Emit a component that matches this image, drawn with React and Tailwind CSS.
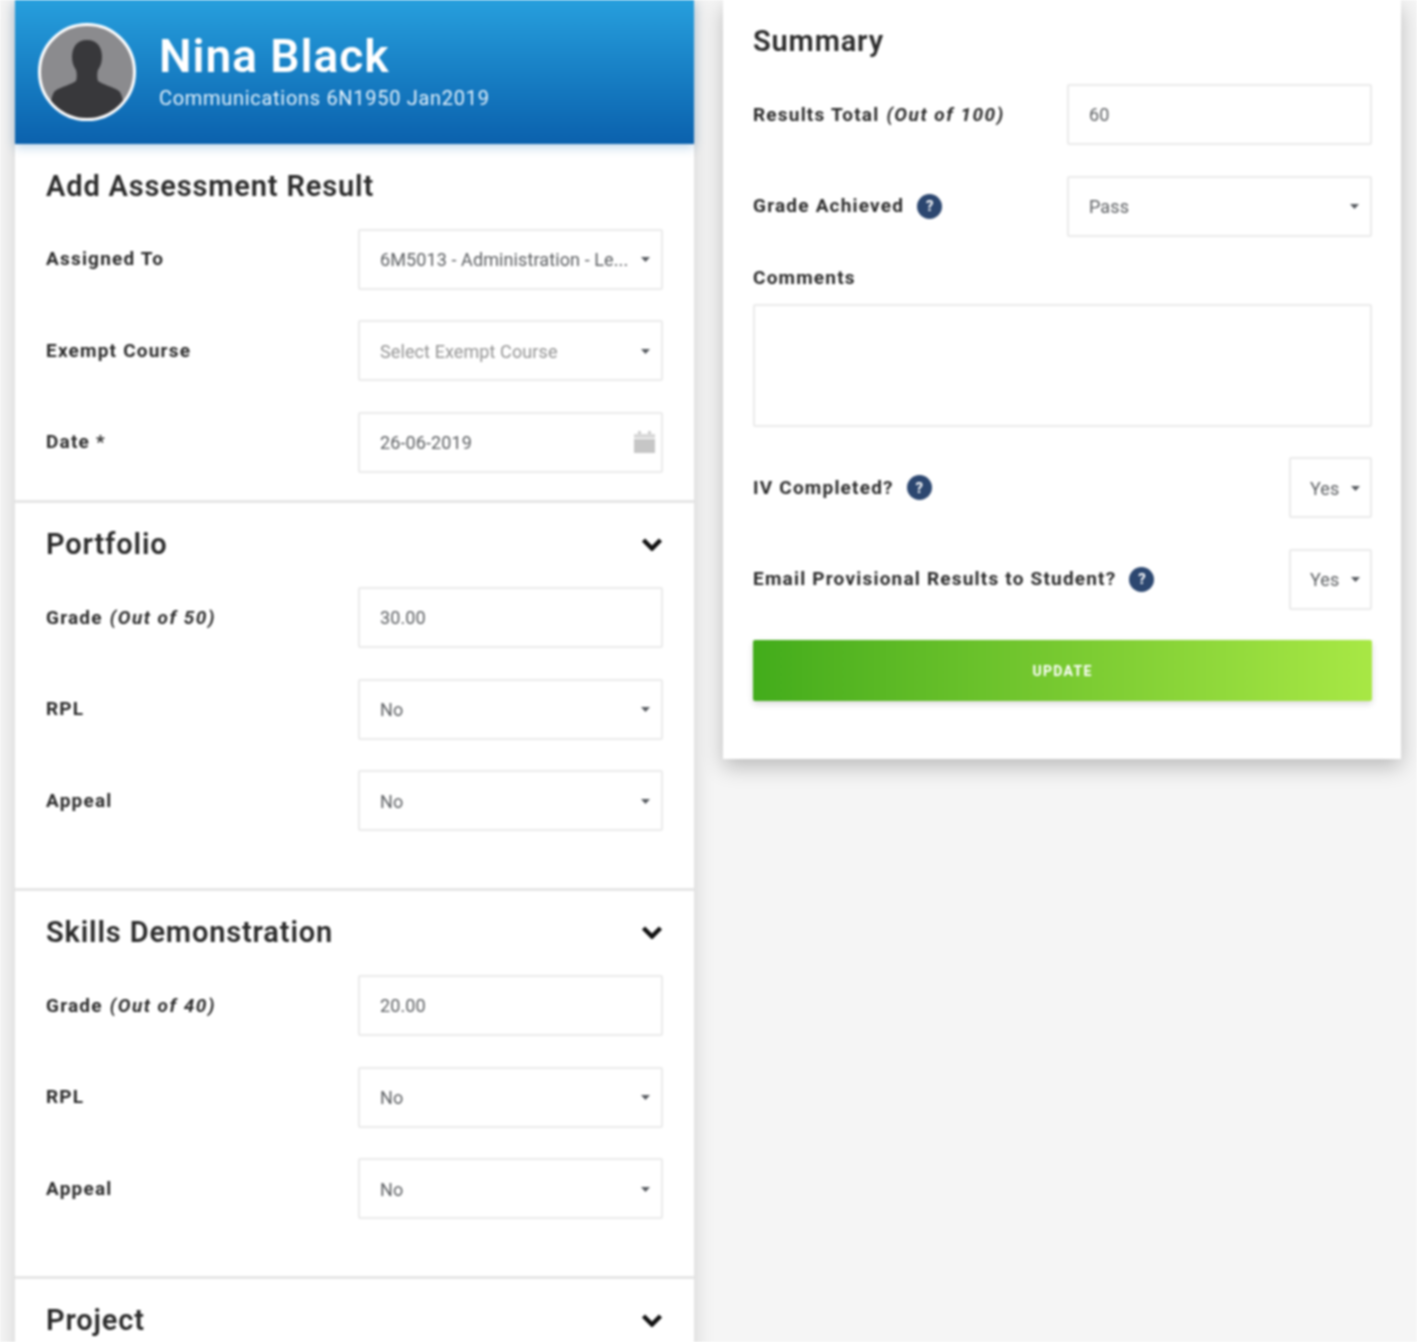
function Caret() {
  return (
    <svg width="9" height="5" viewBox="0 0 9 5" className="shrink-0">
      <path d="M0 0h9L4.5 5z" fill="#55595e" />
    </svg>
  );
}

function Label({ children, italic }) {
  return (
    <div className="text-[19px] leading-6 font-bold text-[#2b2b2b] tracking-[1.2px] whitespace-nowrap">
      {children}
      {italic && <em className="ml-[7px] italic font-bold tracking-[1.5px]">{italic}</em>}
    </div>
  );
}

function Box({ children, className = "" }) {
  return (
    <div className={`h-[61px] bg-white border-2 border-[#ebebeb] rounded-[2px] flex items-center text-[18px] text-[#5c5f62] tracking-[0.1px] whitespace-nowrap ${className}`}>
      {children}
    </div>
  );
}

function Input({ value }) {
  return <Box className="w-[305px] pl-[20px]">{value}</Box>;
}

function Select({ value, muted }) {
  return (
    <Box className="w-[305px] pl-[20px] pr-[11px] pt-[1px] justify-between">
      <span className={muted ? "text-[#939393]" : ""}>{value}</span>
      <Caret />
    </Box>
  );
}

function Row({ label, italic, children }) {
  return (
    <div className="flex items-center justify-between h-[61px]">
      <Label italic={italic}>{label}</Label>
      {children}
    </div>
  );
}

function Chevron() {
  return (
    <svg width="22" height="14" viewBox="0 0 22 14" fill="none">
      <path d="M2.5 3l8.5 8.5L19.5 3" stroke="#111111" strokeWidth="4.5" />
    </svg>
  );
}

function SectionHead({ title }) {
  return (
    <div className="flex items-center justify-between h-[28px]">
      <h2 className="text-[29px] leading-[28px] font-semibold text-[#2b2b2b] tracking-[0.85px]">{title}</h2>
      <Chevron />
    </div>
  );
}

function Section({ title, grade, out }) {
  return (
    <section className="border-t-[3px] border-[#e6e6e6] px-[31px] pt-[27px] pb-[57px]">
      <SectionHead title={title} />
      <div className="mt-[29px] flex flex-col gap-[30.5px]">
        <Row label="Grade" italic={out}><Input value={grade} /></Row>
        <Row label="RPL"><Select value="No" /></Row>
        <Row label="Appeal"><Select value="No" /></Row>
      </div>
    </section>
  );
}

function Help() {
  return (
    <span className="ml-[13px] w-[25px] h-[25px] rounded-full bg-[#2c4770] text-white text-[15px] tracking-normal font-bold flex items-center justify-center shrink-0">?</span>
  );
}

function Calendar() {
  return (
    <svg width="23" height="22" viewBox="0 0 23 22">
      <path d="M5 0h3v3H5zM15 0h3v3h-3z" fill="#cfcfcf" />
      <path d="M1 3h21v4H1z" fill="#d8d8d8" />
      <path d="M1 8h21v14H1z" fill="#c6c6c6" />
    </svg>
  );
}

function Avatar() {
  return (
    <div className="w-[98px] h-[98px] rounded-full border-[3px] border-white bg-[#8b8b8e] overflow-hidden shrink-0">
      <svg viewBox="0 0 92 92" width="92" height="92">
        <path fill="#38383b" d="M46 14c-10 0-15 7-15 17 0 6 2 10 4 13 1 3 1 8 0 11-5 4-14 5-21 10-3 3-5 11-6 27h76c-1-16-3-24-6-27-7-5-16-6-21-10-1-3-1-8 0-11 2-3 4-7 4-13 0-10-5-17-15-17z" />
      </svg>
    </div>
  );
}

export default function App() {
  return (
    <div className="h-[1342px] overflow-hidden bg-[#f5f5f5] flex items-start gap-[29px] pl-[15px] pr-[16px] blur-[0.8px]" style={{ fontFamily: "Roboto, sans-serif" }}>
      <main className="w-[679px] bg-white shadow-[0_0_20px_rgba(0,0,0,0.15)] shrink-0">
        <header className="h-[144px] bg-gradient-to-b from-[#279fdd] to-[#0b61ad] flex items-center pl-[23px] gap-[23px] shadow-[0_3px_10px_rgba(30,110,180,0.3)] relative">
          <Avatar />
          <div className="text-white -mt-[4px]">
            <div className="text-[46px] leading-[52px] font-semibold tracking-[1px]">Nina Black</div>
            <div className="text-[20px] leading-6 text-[#e4f2fc] mt-[4px] tracking-[0.7px]">Communications 6N1950 Jan2019</div>
          </div>
        </header>

        <section className="px-[31px] pt-[28px] pb-[27.5px]">
          <h2 className="text-[29px] leading-[28px] font-semibold text-[#2b2b2b] tracking-[0.85px]">Add Assessment Result</h2>
          <div className="mt-[28.5px] flex flex-col gap-[30.5px]">
            <Row label="Assigned To"><Select value="6M5013 - Administration - Le..." /></Row>
            <Row label="Exempt Course"><Select value="Select Exempt Course" muted /></Row>
            <Row label="Date *">
              <Box className="w-[305px] pl-[20px] pr-[5px] justify-between">
                <span>26-06-2019</span>
                <Calendar />
              </Box>
            </Row>
          </div>
        </section>

        <Section title="Portfolio" grade="30.00" out="(Out of 50)" />
        <Section title="Skills Demonstration" grade="20.00" out="(Out of 40)" />
        <section className="border-t-[3px] border-[#e6e6e6] px-[31px] pt-[27px] pb-[28px]">
          <SectionHead title="Project" />
        </section>
      </main>

      <aside className="w-[678px] h-[759px] bg-white pl-[30px] pr-[29px] pt-[27px] shadow-[0_8px_20px_rgba(0,0,0,0.24)] shrink-0">
        <h2 className="text-[29px] leading-[28px] font-semibold text-[#2b2b2b] tracking-[0.85px]">Summary</h2>
        <div className="mt-[29px] flex flex-col gap-[30.5px]">
          <Row label="Results Total" italic="(Out of 100)"><Input value="60" /></Row>
          <Row label={<span className="flex items-center">Grade Achieved<Help /></span>}><Select value="Pass" /></Row>
        </div>
        <div className="mt-[29.5px]"><Label>Comments</Label></div>
        <div className="mt-[14px] h-[123px] bg-white border-2 border-[#ebebeb] rounded-[2px]" />
        <div className="mt-[30px] flex flex-col gap-[30.5px]">
          <Row label={<span className="flex items-center">IV Completed?<Help /></span>}>
            <Box className="w-[83px] pl-[19px] pr-[10px] pt-[1px] justify-between"><span>Yes</span><Caret /></Box>
          </Row>
          <Row label={<span className="flex items-center">Email Provisional Results to Student?<Help /></span>}>
            <Box className="w-[83px] pl-[19px] pr-[10px] pt-[1px] justify-between"><span>Yes</span><Caret /></Box>
          </Row>
        </div>
        <button className="mt-[30.5px] w-full h-[61px] pt-[1px] rounded-[2px] bg-gradient-to-r from-[#42ac1b] to-[#a8e845] text-white text-[14px] font-bold tracking-[1.3px] shadow-[0_3px_6px_rgba(0,0,0,0.15)]">UPDATE</button>
      </aside>
    </div>
  );
}
